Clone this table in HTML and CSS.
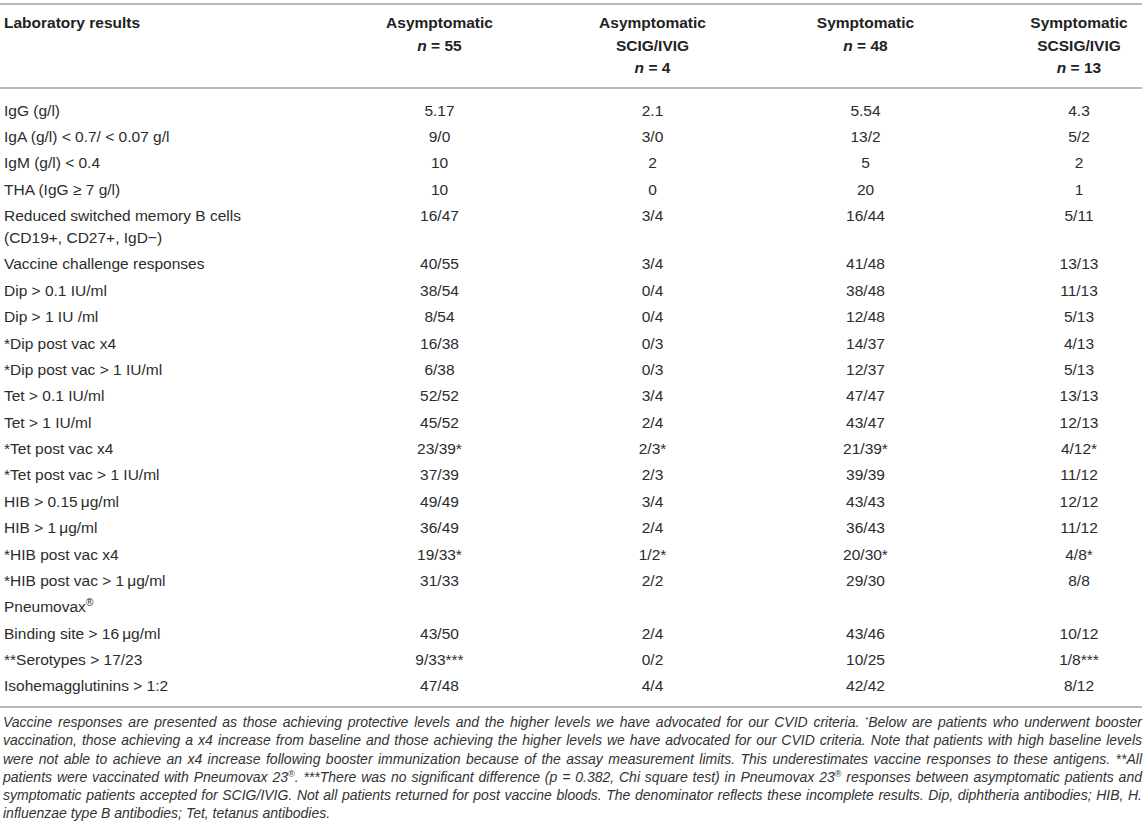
FILE: index.html
```html
<!DOCTYPE html>
<html lang="en">
<head>
  <meta charset="UTF-8" />
  <meta name="viewport" content="width=device-width, initial-scale=1.0"/>
  <title>Laboratory results</title>
  <link rel="stylesheet" href="styles.css">
</head>
<body>

  <table class="results">
    <colgroup>
      <col class="col-label">
      <col class="col-val">
      <col class="col-val">
      <col class="col-val">
      <col class="col-last">
    </colgroup>
    <thead>
      <tr>
        <th class="label">Laboratory results</th>
        <th>Asymptomatic<br><i>n</i> = 55</th>
        <th>Asymptomatic<br>SCIG/IVIG<br><i>n</i> = 4</th>
        <th>Symptomatic<br><i>n</i> = 48</th>
        <th class="last">Symptomatic<br>SCSIG/IVIG<br><i>n</i> = 13</th>
      </tr>
    </thead>
    <tbody>
      <tr><td class="label">IgG (g/l)</td><td>5.17</td><td>2.1</td><td>5.54</td><td class="last">4.3</td></tr>
      <tr><td class="label">IgA (g/l) &lt; 0.7/ &lt; 0.07 g/l</td><td>9/0</td><td>3/0</td><td>13/2</td><td class="last">5/2</td></tr>
      <tr><td class="label">IgM (g/l) &lt; 0.4</td><td>10</td><td>2</td><td>5</td><td class="last">2</td></tr>
      <tr><td class="label">THA (IgG ≥ 7 g/l)</td><td>10</td><td>0</td><td>20</td><td class="last">1</td></tr>
      <tr><td class="label">Reduced switched memory B cells<br>(CD19+, CD27+, IgD−)</td><td>16/47</td><td>3/4</td><td>16/44</td><td class="last">5/11</td></tr>
      <tr><td class="label">Vaccine challenge responses</td><td>40/55</td><td>3/4</td><td>41/48</td><td class="last">13/13</td></tr>
      <tr><td class="label">Dip &gt; 0.1 IU/ml</td><td>38/54</td><td>0/4</td><td>38/48</td><td class="last">11/13</td></tr>
      <tr><td class="label">Dip &gt; 1 IU /ml</td><td>8/54</td><td>0/4</td><td>12/48</td><td class="last">5/13</td></tr>
      <tr><td class="label">*Dip post vac x4</td><td>16/38</td><td>0/3</td><td>14/37</td><td class="last">4/13</td></tr>
      <tr><td class="label">*Dip post vac &gt; 1 IU/ml</td><td>6/38</td><td>0/3</td><td>12/37</td><td class="last">5/13</td></tr>
      <tr><td class="label">Tet &gt; 0.1 IU/ml</td><td>52/52</td><td>3/4</td><td>47/47</td><td class="last">13/13</td></tr>
      <tr><td class="label">Tet &gt; 1 IU/ml</td><td>45/52</td><td>2/4</td><td>43/47</td><td class="last">12/13</td></tr>
      <tr><td class="label">*Tet post vac x4</td><td>23/39*</td><td>2/3*</td><td>21/39*</td><td class="last">4/12*</td></tr>
      <tr><td class="label">*Tet post vac &gt; 1 IU/ml</td><td>37/39</td><td>2/3</td><td>39/39</td><td class="last">11/12</td></tr>
      <tr><td class="label">HIB &gt; 0.15&#8201;μg/ml</td><td>49/49</td><td>3/4</td><td>43/43</td><td class="last">12/12</td></tr>
      <tr><td class="label">HIB &gt; 1&#8201;μg/ml</td><td>36/49</td><td>2/4</td><td>36/43</td><td class="last">11/12</td></tr>
      <tr><td class="label">*HIB post vac x4</td><td>19/33*</td><td>1/2*</td><td>20/30*</td><td class="last">4/8*</td></tr>
      <tr><td class="label">*HIB post vac &gt; 1&#8201;μg/ml</td><td>31/33</td><td>2/2</td><td>29/30</td><td class="last">8/8</td></tr>
      <tr><td class="label">Pneumovax<sup>®</sup></td><td></td><td></td><td></td><td class="last"></td></tr>
      <tr><td class="label">Binding site &gt; 16&#8201;μg/ml</td><td>43/50</td><td>2/4</td><td>43/46</td><td class="last">10/12</td></tr>
      <tr><td class="label">**Serotypes &gt; 17/23</td><td>9/33***</td><td>0/2</td><td>10/25</td><td class="last">1/8***</td></tr>
      <tr><td class="label">Isohemagglutinins &gt; 1:2</td><td>47/48</td><td>4/4</td><td>42/42</td><td class="last">8/12</td></tr>
    </tbody>
  </table>

  <!-- footnote, one block per printed line so the breaks stay put -->
  <div class="footnote">
    <span class="line">Vaccine responses are presented as those achieving protective levels and the higher levels we have advocated for our CVID criteria. <sup class="star">*</sup>Below are patients who underwent booster</span>
    <span class="line">vaccination, those achieving a x4 increase from baseline and those achieving the higher levels we have advocated for our CVID criteria. Note that patients with high baseline levels</span>
    <span class="line">were not able to achieve an x4 increase following booster immunization because of the assay measurement limits. This underestimates vaccine responses to these antigens. **All</span>
    <span class="line">patients were vaccinated with Pneumovax 23<sup>®</sup>. ***There was no significant difference (p = 0.382, Chi square test) in Pneumovax 23<sup>®</sup> responses between asymptomatic patients and</span>
    <span class="line">symptomatic patients accepted for SCIG/IVIG. Not all patients returned for post vaccine bloods. The denominator reflects these incomplete results. Dip, diphtheria antibodies; HIB, H.</span>
    <span class="line end">influenzae type B antibodies; Tet, tetanus antibodies.</span>
  </div>

</body>
</html>
```

FILE: styles.css
```css
body {
  margin: 0;
  padding: 3px 4px 0 0;
  background: #fff;
  color: #2c2c2c;
  font-family: 'Liberation Sans', Arial, sans-serif;
  font-size: 15.5px;
}
.results {
  width: 1142px;
  table-layout: fixed;
  border-collapse: collapse;
  border-top: 2px solid #b8b8b8;
  border-bottom: 2px solid #b8b8b8;
}
.col-label {
  width: 333px;
}
.col-val {
  width: 213px;
}
.col-last {
  width: 170px;
}
th, td {
  text-align: center;
  padding: 0;
  font-weight: normal;
}
th {
  color: #222;
  font-weight: bold;
  line-height: 22.5px;
  vertical-align: top;
  padding: 7px 0 7px;
  border-bottom: 2px solid #b8b8b8;
}
th i {
  font-style: italic;
}
td {
  line-height: 22px;
  padding: 2.2px 0;
  vertical-align: top;
  white-space: nowrap;
}
.label {
  text-align: left;
  padding-left: 4px;
}
.last {
  padding-left: 44px;
}
tbody tr:first-child td {
  padding-top: 11px;
}
tbody tr:last-child td {
  padding-bottom: 8.6px;
}
sup {
  font-size: 10.5px;
  line-height: 0;
  vertical-align: 6px;
}
.footnote {
  margin-top: 5px;
  padding-left: 3px;
  width: 1139px;
  font-size: 14px;
  font-style: italic;
  line-height: 18.3px;
  color: #333;
}
.footnote .line {
  display: block;
  white-space: nowrap;
  text-align: justify;
  text-align-last: justify;
}
.footnote .line.end {
  text-align-last: left;
}
.footnote sup {
  font-size: 9px;
  vertical-align: 5px;
}
.footnote .star {
  font-size: 8px;
}
```
